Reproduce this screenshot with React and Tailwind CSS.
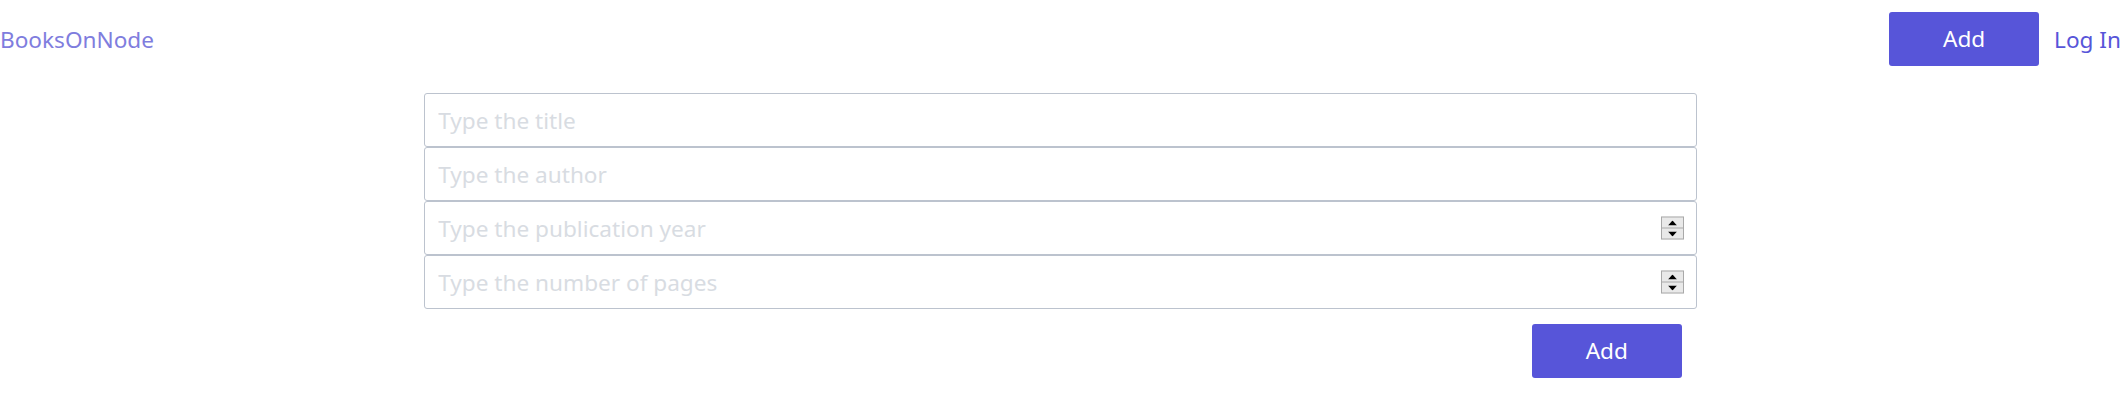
import React from "react";

const font = { fontFamily: '"Noto Sans", "Open Sans", sans-serif' };

function Spinner() {
  return (
    <div className="absolute right-[13px] top-1/2 -translate-y-1/2 w-[23px] h-[23px] border border-[#a9a9a9] bg-[#e9e9e9] flex flex-col pointer-events-none">
      <div className="flex-1 flex items-center justify-center border-b border-[#a9a9a9]">
        <svg width="9" height="5" viewBox="0 0 9 5"><path d="M0 5 L4.5 0 L9 5 Z" fill="#000" /></svg>
      </div>
      <div className="flex-1 flex items-center justify-center">
        <svg width="9" height="5" viewBox="0 0 9 5"><path d="M0 0 L4.5 5 L9 0 Z" fill="#000" /></svg>
      </div>
    </div>
  );
}

function Field({ placeholder, spin }) {
  return (
    <div className="relative">
      <input
        type="text"
        placeholder={placeholder}
        className="block w-full h-[54px] border border-[#bcc3ce] rounded-[3px] bg-white px-[13px] text-[22.6px] text-[#3b4351] placeholder:text-[#d8dce2] outline-none"
        style={font}
      />
      {spin && <Spinner />}
    </div>
  );
}

export default function App() {
  return (
    <div className="w-full bg-white" style={font}>
      <header className="flex items-center justify-between pt-[12px]">
        <a className="text-[22.6px] text-[#7f7dde] leading-none pt-[2px]">BooksOnNode</a>
        <div className="flex items-center gap-[15px]">
          <button className="w-[150px] h-[54px] rounded-[3px] bg-[#5755d9] text-white text-[22.6px]">Add</button>
          <a className="text-[22.6px] text-[#5755d9] whitespace-nowrap pt-[2px]">Log In</a>
        </div>
      </header>
      <form className="w-[60%] mx-auto mt-[27px] flex flex-col">
        <Field placeholder="Type the title" />
        <Field placeholder="Type the author" />
        <Field placeholder="Type the publication year" spin />
        <Field placeholder="Type the number of pages" spin />
        <div className="flex justify-end mt-[15px] pr-[15px]">
          <button type="button" className="w-[150px] h-[54px] rounded-[3px] bg-[#5755d9] text-white text-[22.6px]">Add</button>
        </div>
      </form>
    </div>
  );
}
